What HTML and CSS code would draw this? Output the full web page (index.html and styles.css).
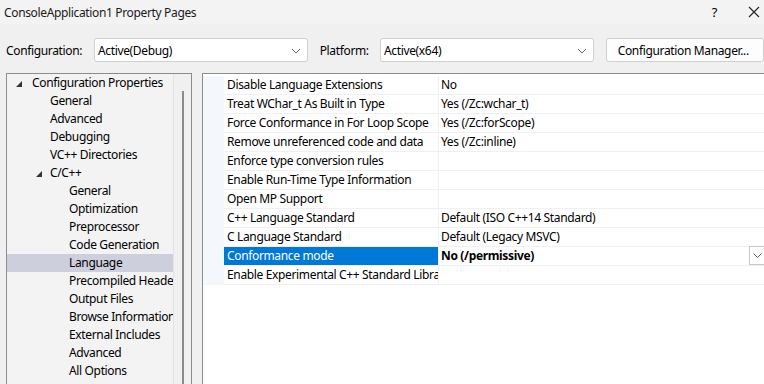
FILE: index.html
```html
<!DOCTYPE html>
<html lang="en">
<head>
    <meta charset="UTF-8">
    <title>ConsoleApplication1 Property Pages</title>
    <link rel="stylesheet" href="styles.css">
</head>
<body>
    <!-- Title bar -->
    <div class="titlebar">
        <span class="title">ConsoleApplication1 Property Pages</span>
        <span class="help">?</span>
        <svg class="close" width="12" height="12" viewBox="0 0 12 12"><path d="M1 1L11 11M11 1L1 11" stroke="#222" stroke-width="1.1" fill="none"/></svg>
    </div>

    <!-- Configuration / platform -->
    <div class="toolbar">
        <span class="label">Configuration:</span>
        <div class="select cfg">
            <span>Active(Debug)</span>
            <svg width="10" height="6" viewBox="0 0 10 6"><path d="M1 1L5 5L9 1" stroke="#666" fill="none"/></svg>
        </div>
        <span class="label platform-label">Platform:</span>
        <div class="select plat">
            <span>Active(x64)</span>
            <svg width="10" height="6" viewBox="0 0 10 6"><path d="M1 1L5 5L9 1" stroke="#666" fill="none"/></svg>
        </div>
        <div class="button">Configuration Manager...</div>
    </div>

    <div class="main">
        <!-- Tree -->
        <div class="tree-panel">
            <div class="tree">
                <div class="node lvl0"><svg class="tri" width="6" height="6" viewBox="0 0 6 6"><polygon points="6,0 6,6 0,6" fill="#333"/></svg>Configuration Properties</div>
                <div class="node lvl1">General</div>
                <div class="node lvl1">Advanced</div>
                <div class="node lvl1">Debugging</div>
                <div class="node lvl1">VC++ Directories</div>
                <div class="node lvl1 open"><svg class="tri" width="6" height="6" viewBox="0 0 6 6"><polygon points="6,0 6,6 0,6" fill="#333"/></svg>C/C++</div>
                <div class="node lvl2">General</div>
                <div class="node lvl2">Optimization</div>
                <div class="node lvl2">Preprocessor</div>
                <div class="node lvl2">Code Generation</div>
                <div class="node lvl2 selected">Language</div>
                <div class="node lvl2">Precompiled Headers</div>
                <div class="node lvl2">Output Files</div>
                <div class="node lvl2">Browse Information</div>
                <div class="node lvl2">External Includes</div>
                <div class="node lvl2">Advanced</div>
                <div class="node lvl2">All Options</div>
            </div>
            <div class="scroll"><div class="thumb"></div></div>
        </div>

        <!-- Property grid -->
        <div class="grid-panel">
            <div class="grid">
                <div class="gutter"></div>
                <div class="rows">
                    <div class="row"><div class="name">Disable Language Extensions</div><div class="value">No</div></div>
                    <div class="row"><div class="name">Treat WChar_t As Built in Type</div><div class="value">Yes (/Zc:wchar_t)</div></div>
                    <div class="row"><div class="name">Force Conformance in For Loop Scope</div><div class="value">Yes (/Zc:forScope)</div></div>
                    <div class="row"><div class="name">Remove unreferenced code and data</div><div class="value">Yes (/Zc:inline)</div></div>
                    <div class="row"><div class="name">Enforce type conversion rules</div><div class="value"></div></div>
                    <div class="row"><div class="name">Enable Run-Time Type Information</div><div class="value"></div></div>
                    <div class="row"><div class="name">Open MP Support</div><div class="value"></div></div>
                    <div class="row"><div class="name">C++ Language Standard</div><div class="value">Default (ISO C++14 Standard)</div></div>
                    <div class="row"><div class="name">C Language Standard</div><div class="value">Default (Legacy MSVC)</div></div>
                    <div class="row active"><div class="name">Conformance mode</div><div class="value"><span>No (/permissive)</span>
                        <div class="drop"><svg width="9" height="5" viewBox="0 0 9 5"><path d="M0.5 0.5L4.5 4.5L8.5 0.5" stroke="#555" fill="none"/></svg></div></div></div>
                    <div class="row"><div class="name">Enable Experimental C++ Standard Library Modules</div><div class="value"></div></div>
                </div>
            </div>
        </div>
    </div>
</body>
</html>
```
FILE: styles.css
```css
body {
    margin: 0;
    width: 764px;
    height: 384px;
    overflow: hidden;
    background: #f0f0f0;
    color: #000;
    font-family: "Noto Sans", "Open Sans", sans-serif;
    font-size: 12px;
    letter-spacing: -0.35px;
}

.titlebar {
    height: 24px;
    display: flex;
    align-items: center;
    padding-left: 4px;
    background: #f3f3f3;
}

.titlebar .title {
    flex: 1;
    color: #1a1a1a;
}

.titlebar .help {
    margin-right: 31px;
    font-size: 13px;
}

.titlebar .close {
    margin-right: 4px;
}

.toolbar {
    height: 24px;
    margin-top: 14px;
    display: flex;
    align-items: center;
    padding-left: 6px;
}

.label {
    width: 89px;
}

.platform-label {
    width: 61px;
    margin-left: 12px;
}

.select {
    box-sizing: border-box;
    height: 24px;
    width: 216px;
    display: flex;
    align-items: center;
    justify-content: space-between;
    padding: 0 6px 0 3px;
    background: #fff;
    border: 1px solid #d0d0d0;
    border-radius: 3px;
}

.select svg {
    margin-top: 1px;
}

.button {
    box-sizing: border-box;
    height: 24px;
    width: 160px;
    margin-left: 12px;
    display: flex;
    align-items: center;
    padding-left: 11px;
    background: #fdfdfd;
    border: 1px solid #d0d0d0;
    border-radius: 3px;
}

.main {
    display: flex;
    margin-top: 11px;
    padding-left: 6px;
}

.tree-panel {
    box-sizing: border-box;
    width: 186px;
    height: 311px;
    display: flex;
    background: #f3f3f3;
    border: 1px solid #8c8c8c;
    border-bottom: none;
}

.tree {
    flex: 1;
    overflow: hidden;
}

.node {
    height: 18px;
    line-height: 18px;
    white-space: nowrap;
    overflow: hidden;
    display: flex;
    align-items: center;
}

.node .tri {
    margin-top: 2px;
}

.lvl0 {
    padding-left: 9px;
}

.lvl0 .tri {
    margin-right: 10px;
}

.lvl1 {
    padding-left: 43px;
}

.lvl1.open {
    padding-left: 29px;
}

.lvl1 .tri {
    margin-right: 8px;
}

.lvl2 {
    padding-left: 62px;
}

.node.selected {
    background: #cdcfdc;
}

.scroll {
    width: 17px;
    overflow: hidden;
    background: #f0f0f0;
    border-left: 1px solid #e4e4e4;
    display: flex;
    justify-content: center;
}

.thumb {
    width: 2px;
    margin-top: 17px;
    height: 300px;
    background: #8a8a8a;
}

.grid-panel {
    flex: 1;
    height: 311px;
    margin-left: 10px;
    background: #fff;
    border-top: 1px solid #8c8c8c;
    border-left: 1px solid #8c8c8c;
}

.grid {
    display: flex;
    margin-top: 2px;
}

.gutter {
    width: 21px;
    background: #f4f7fc;
}

.rows {
    flex: 1;
}

.row {
    display: flex;
    height: 19px;
    box-sizing: border-box;
    border-bottom: 1px solid #eef0f4;
}

.row .name {
    width: 215px;
    padding-left: 3px;
    line-height: 18px;
    white-space: nowrap;
    overflow: hidden;
    box-sizing: border-box;
    border-right: 1px solid #eef0f4;
}

.row .value {
    flex: 1;
    padding-left: 2px;
    line-height: 18px;
    display: flex;
    justify-content: space-between;
}

.row.active .name {
    background: #0078d7;
    color: #fff;
}

.row.active .value {
    font-weight: bold;
}

.drop {
    box-sizing: border-box;
    width: 15px;
    height: 19px;
    margin-top: -1px;
    display: flex;
    align-items: center;
    justify-content: center;
    border: 1px solid #c8c8c8;
    border-right: none;
    background: #fff;
}
```
